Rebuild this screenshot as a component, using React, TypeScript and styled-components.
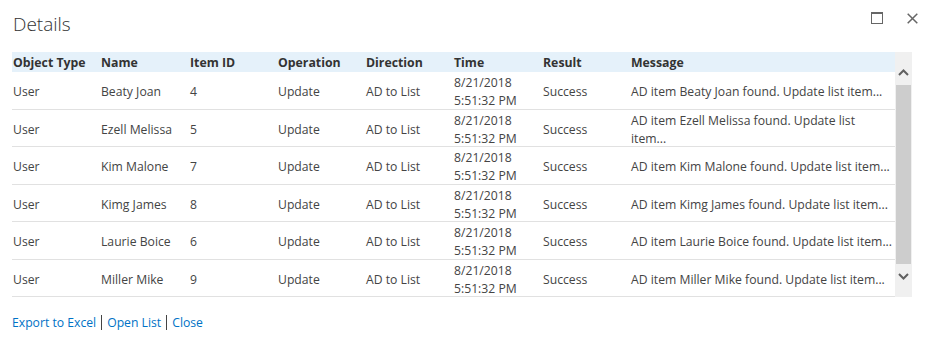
import React from "react";
import styled, { createGlobalStyle } from "styled-components";

const Global = createGlobalStyle`
  html, body { margin: 0; padding: 0; background: #fff; }
  body { font-family: "Open Sans", "Noto Sans", sans-serif; color: #444; }
`;

const Dialog = styled.div`
  width: 928px;
  height: 345px;
  box-sizing: border-box;
  padding: 0 10px 0 12px;
  display: flex;
  flex-direction: column;
`;

const TitleBar = styled.div`
  height: 52px;
  display: flex;
  align-items: flex-start;
  justify-content: space-between;
`;

const Title = styled.h1`
  margin: 10px 0 0 1px;
  font-size: 19px;
  line-height: 28px;
  font-weight: 300;
  color: #333;
`;

const WindowButtons = styled.div`
  display: flex;
  align-items: center;
  gap: 23px;
  margin-top: 12px;
`;

const IconButton = styled.button`
  border: 0;
  padding: 0;
  background: transparent;
  width: 12px;
  height: 12px;
  display: flex;
  align-items: center;
  justify-content: center;
  cursor: pointer;
`;

const Grid = styled.div`
  display: flex;
  height: 245px;
  width: 900px;
`;

const TableArea = styled.div`
  flex: 1;
  display: flex;
  flex-direction: column;
`;

const cols = "88px 89px 88px 88px 88px 89px 88px 1fr";

const HeaderRow = styled.div`
  display: grid;
  grid-template-columns: ${cols};
  height: 20px;
  align-items: center;
  background: #e5f1fa;
`;

const HeaderCell = styled.div`
  padding-left: 1px;
  font-size: 12.3px;
  font-weight: 700;
  color: #333;
  white-space: nowrap;
`;

const Row = styled.div`
  display: grid;
  grid-template-columns: ${cols};
  height: 37.5px;
  box-sizing: border-box;
  padding-top: 2px;
  align-items: center;
  border-bottom: 1px solid #e1e1e1;
`;

const Cell = styled.div`
  padding-left: 1px;
  font-size: 12.2px;
  line-height: 18px;
  color: #444;
  white-space: nowrap;
`;

const Scrollbar = styled.div`
  width: 17px;
  background: #f0f0f0;
  display: flex;
  flex-direction: column;
`;

const ScrollButton = styled.div<{ $down?: boolean }>`
  height: 33px;
  display: flex;
  justify-content: center;
  align-items: ${(p) => (p.$down ? "flex-start" : "flex-end")};
  padding: ${(p) => (p.$down ? "9px 0 0" : "0 0 9px")};
  box-sizing: border-box;
`;

const Thumb = styled.div`
  flex: 1;
  margin: 0 1px;
  background: #cdcdcd;
`;

const Footer = styled.div`
  display: flex;
  align-items: center;
  margin-top: 17px;
  font-size: 12.2px;
`;

const Link = styled.a`
  color: #0072c6;
  text-decoration: none;
  cursor: pointer;
`;

const Sep = styled.span`
  display: inline-block;
  width: 1px;
  height: 15px;
  background: #444;
  margin: 0 5px;
`;

type Item = { name: string; id: number; msg: string[] };

const items: Item[] = [
  { name: "Beaty Joan", id: 4, msg: ["AD item Beaty Joan found. Update list item..."] },
  { name: "Ezell Melissa", id: 5, msg: ["AD item Ezell Melissa found. Update list", "item..."] },
  { name: "Kim Malone", id: 7, msg: ["AD item Kim Malone found. Update list item..."] },
  { name: "Kimg James", id: 8, msg: ["AD item Kimg James found. Update list item..."] },
  { name: "Laurie Boice", id: 6, msg: ["AD item Laurie Boice found. Update list item..."] },
  { name: "Miller Mike", id: 9, msg: ["AD item Miller Mike found. Update list item..."] },
];

const headers = ["Object Type", "Name", "Item ID", "Operation", "Direction", "Time", "Result", "Message"];

const Chevron = ({ up }: { up?: boolean }) => (
  <svg width="11" height="7" viewBox="0 0 11 7">
    <path
      d={up ? "M1 6 L5.5 1.5 L10 6" : "M1 1 L5.5 5.5 L10 1"}
      fill="none"
      stroke="#606060"
      strokeWidth="2"
    />
  </svg>
);

export default function App() {
  return (
    <>
      <Global />
      <Dialog>
        <TitleBar>
          <Title>Details</Title>
          <WindowButtons>
            <IconButton aria-label="Maximize">
              <svg width="12" height="12" viewBox="0 0 12 12">
                <rect x="0.5" y="0.5" width="11" height="11" fill="none" stroke="#666" />
                <rect x="0" y="0" width="12" height="2" fill="#666" />
              </svg>
            </IconButton>
            <IconButton aria-label="Close">
              <svg width="11" height="11" viewBox="0 0 11 11">
                <path d="M0.7 0.7 L10.3 10.3 M10.3 0.7 L0.7 10.3" stroke="#666" strokeWidth="1.5" />
              </svg>
            </IconButton>
          </WindowButtons>
        </TitleBar>
        <Grid>
          <TableArea>
            <HeaderRow>
              {headers.map((h) => (
                <HeaderCell key={h}>{h}</HeaderCell>
              ))}
            </HeaderRow>
            {items.map((it) => (
              <Row key={it.id}>
                <Cell>User</Cell>
                <Cell>{it.name}</Cell>
                <Cell>{it.id}</Cell>
                <Cell>Update</Cell>
                <Cell>AD to List</Cell>
                <Cell>
                  8/21/2018
                  <br />
                  5:51:32 PM
                </Cell>
                <Cell>Success</Cell>
                <Cell>
                  {it.msg.map((m, i) => (
                    <React.Fragment key={i}>
                      {i > 0 && <br />}
                      {m}
                    </React.Fragment>
                  ))}
                </Cell>
              </Row>
            ))}
          </TableArea>
          <Scrollbar>
            <ScrollButton>
              <Chevron up />
            </ScrollButton>
            <Thumb />
            <ScrollButton $down>
              <Chevron />
            </ScrollButton>
          </Scrollbar>
        </Grid>
        <Footer>
          <Link>Export to Excel</Link>
          <Sep />
          <Link>Open List</Link>
          <Sep />
          <Link>Close</Link>
        </Footer>
      </Dialog>
    </>
  );
}
